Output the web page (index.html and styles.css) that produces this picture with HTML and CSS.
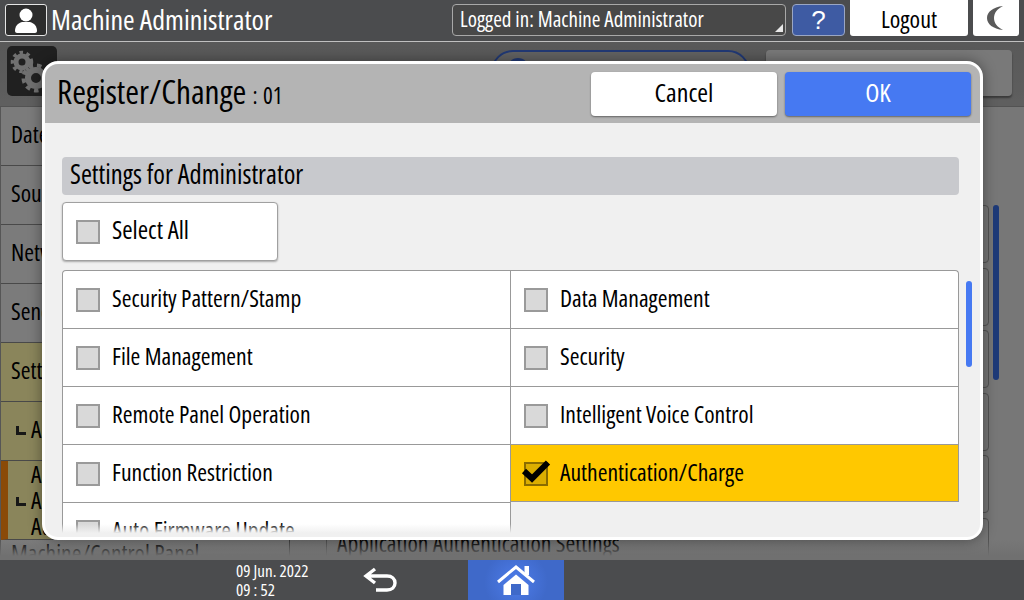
FILE: index.html
```html
<!DOCTYPE html>
<html lang="en">
<head>
<meta charset="utf-8">
<title>System Settings</title>
<link rel="stylesheet" href="styles.css">
</head>
<body>
<div class="screen">
  <header class="topbar">
    <div class="user-icon">
      <svg viewBox="0 0 40 30" width="40" height="30"><circle cx="20" cy="10" r="6.500" fill="#fff"/><path d="M9 26c0-5 3-8 7-9h8c4 1 7 4 7 9 0 1-1 2-2 2H11c-1 0-2-1-2-2z" fill="#fff"/></svg>
    </div>
    <div class="machine-title">Machine Administrator</div>
    <div class="login-box">Logged in: Machine Administrator<span class="corner"></span></div>
    <div class="help-btn">?</div>
    <div class="logout-btn">Logout</div>
    <div class="moon-btn">
      <svg viewBox="0 0 24 30" width="24" height="30"><path d="M19 3C9 4 3 9 3 15s6 11 16 12c-6-3-9-7-9-12s3-9 9-12z" fill="#5a5a5a"/></svg>
    </div>
  </header>

  <main class="main">
    <div class="subhead">
      <div class="gear-tile">
        <svg viewBox="0 0 50 50" width="50" height="50">
          <g fill="none" stroke="#cfcfcf"><circle cx="15" cy="16" r="6" stroke-width="5"/><circle cx="15" cy="16" r="9.500" stroke-width="3.500" stroke-dasharray="3.500 3.500"/><circle cx="29" cy="32" r="8" stroke-width="6"/><circle cx="29" cy="32" r="12.500" stroke-width="4" stroke-dasharray="4.500 4"/></g>
        </svg>
      </div>
      <div class="subhead-title">System Settings</div>
      <div class="search-pill"><span class="pill-dot"></span></div>
      <div class="sub-btn">Machine Settings</div>
    </div>
    <div class="content">
      <nav class="side">
        <div class="side-row">Date/Time/Timer</div>
        <div class="side-row">Sound</div>
        <div class="side-row">Network/Interface</div>
        <div class="side-row">Send (Email/Folder)</div>
        <div class="side-row side-olive">Settings for Administrator</div>
        <div class="side-row side-olive"><span class="elbow"></span>Administrator</div>
        <div class="side-row side-current">
          <div>Authentication</div>
          <div><span class="elbow"></span>Authentication</div>
          <div>Authentication</div>
        </div>
        <div class="side-row side-last">Machine/Control Panel</div>
      </nav>
      <section class="panel">
        <div class="panel-list">
          <div class="panel-btn"></div>
          <div class="panel-btn"></div>
          <div class="panel-btn"></div>
          <div class="panel-btn"></div>
          <div class="panel-btn"></div>
          <div class="panel-btn panel-text">Application Authentication Settings</div>
        </div>
        <div class="panel-scroll"></div>
      </section>
    </div>
    <div class="dim"></div>
    <div class="strip-fade"></div>
  </main>

  <footer class="footer">
    <div class="clock"><div>09 Jun. 2022</div><div>09 : 52</div></div>
    <div class="back">
      <svg viewBox="0 0 36 28" width="36" height="28"><path d="M12 3 3 10l9 7M4 10h20c5 0 8 3 8 7s-3 7-8 7H13" fill="none" stroke="#fff" stroke-width="3.400"/></svg>
    </div>
    <div class="home">
      <svg viewBox="0 0 40 32" width="40" height="32"><path d="M2 18 20 3l18 15" fill="none" stroke="#fff" stroke-width="3"/><path d="M28.500 2h4.500v9h-4.500z" fill="#fff"/><path d="M7.500 21 20 10.500 32.500 21v10h-25z" fill="#fff"/><path d="M15 20h10v11H15z" fill="#3f69c9"/></svg>
    </div>
  </footer>

  <div class="modal">
    <div class="modal-head">
      <div class="modal-title">Register/Change<span class="modal-num"> : 01</span></div>
      <div class="btn btn-cancel">Cancel</div>
      <div class="btn btn-ok">OK</div>
    </div>
    <div class="modal-body">
      <div class="section-title">Settings for Administrator</div>
      <div class="select-all"><span class="box"></span><span class="select-label">Select All</span></div>
      <div class="list-wrap">
        <div class="list">
          <div class="cell"><span class="box"></span>Security Pattern/Stamp</div>
          <div class="cell"><span class="box"></span>Data Management</div>
          <div class="cell"><span class="box"></span>File Management</div>
          <div class="cell"><span class="box"></span>Security</div>
          <div class="cell"><span class="box"></span>Remote Panel Operation</div>
          <div class="cell"><span class="box"></span>Intelligent Voice Control</div>
          <div class="cell"><span class="box"></span>Function Restriction</div>
          <div class="cell cell-on">
            <span class="box box-on">
              <svg class="tick" viewBox="0 0 30 24" width="30" height="24"><path d="M3 12l8 7.500L27 3.500" fill="none" stroke="#000" stroke-width="6"/></svg>
            </span>Authentication/Charge
          </div>
          <div class="cell"><span class="box"></span>Auto Firmware Update</div>
          <div class="cell-empty"></div>
        </div>
        <div class="fade"></div>
      </div>
      <div class="modal-scroll"></div>
    </div>
  </div>
</div>
</body>
</html>
```
FILE: styles.css
```css
* { box-sizing: border-box; }
html, body { margin: 0; padding: 0; }
body {
  width: 1024px;
  height: 600px;
  overflow: hidden;
  font-family: "Open Sans", "Liberation Sans", sans-serif;
  font-stretch: 75%;
  color: #000;
}
.screen {
  position: relative;
  width: 1024px;
  height: 600px;
  display: flex;
  flex-direction: column;
  overflow: hidden;
}

/* top bar */
.topbar {
  height: 41px;
  flex: none;
  background: #4b4c4e;
  display: flex;
  align-items: flex-start;
  color: #fff;
}
.user-icon {
  width: 42px;
  height: 32px;
  margin: 4px 0 0 5px;
  background: #2c2c2c;
  border: 1px solid #e4e4e4;
  border-radius: 3px;
  display: flex;
  align-items: center;
  justify-content: center;
}
.machine-title {
  width: 401px;
  margin-left: 4px;
  font-size: 28px;
  line-height: 39px;
}
.login-box {
  position: relative;
  width: 334px;
  height: 32px;
  margin: 4px 0 0 0;
  padding-left: 7px;
  border: 1px solid #a8a8a8;
  border-radius: 4px;
  background: #484848;
  font-size: 21px;
  line-height: 28px;
}
.corner {
  position: absolute;
  right: 2px;
  bottom: 3px;
  width: 0;
  height: 0;
  border-style: solid;
  border-width: 0 0 8px 8px;
  border-color: transparent transparent #e8e8e8 transparent;
}
.help-btn {
  width: 53px;
  height: 32px;
  margin: 4px 0 0 6px;
  background: #3e5ba3;
  border: 1px solid #9aa6c4;
  border-radius: 4px;
  font-family: "Liberation Sans", sans-serif;
  font-size: 26px;
  line-height: 30px;
  text-align: center;
}
.logout-btn {
  width: 118px;
  height: 36px;
  margin-left: 5px;
  background: #fff;
  border-radius: 0 0 3px 3px;
  color: #000;
  font-size: 24px;
  line-height: 37px;
  text-align: center;
}
.moon-btn {
  width: 46px;
  height: 36px;
  margin-left: 5px;
  background: #fff;
  border-radius: 0 0 3px 3px;
  display: flex;
  align-items: center;
  justify-content: center;
}

/* dimmed application behind the dialog */
.main {
  position: relative;
  flex: 1;
  min-height: 0;
  display: flex;
  flex-direction: column;
  background: #dcdcdc;
  overflow: hidden;
  border-top: 1px solid #c0c0c0;
}
.dim {
  position: absolute;
  inset: 0;
  background: rgba(0, 0, 0, 0.46);
}
.strip-fade {
  position: absolute;
  left: 0;
  right: 0;
  bottom: 0;
  height: 20px;
  background: linear-gradient(rgba(112, 112, 112, 0), #707070 80%);
}
.subhead {
  height: 65px;
  flex: none;
  display: flex;
  align-items: flex-start;
  background: linear-gradient(#a4a4a4, #b0b0b0);
  border-bottom: 1px solid #999;
}
.gear-tile {
  width: 50px;
  height: 50px;
  margin: 4px 0 0 7px;
  background: #3c3c3c;
  border-radius: 5px;
  overflow: hidden;
}
.subhead-title {
  width: 428px;
  margin-left: 6px;
  margin-top: 11px;
  font-size: 25px;
}
.search-pill {
  position: relative;
  width: 259px;
  height: 46px;
  margin-top: 8px;
  border: 2px solid #3d6ad8;
  border-radius: 22px;
  background: #b8b8b8;
}
.pill-dot {
  position: absolute;
  left: 14px;
  top: 6px;
  width: 22px;
  height: 22px;
  border-radius: 50%;
  background: #3d6ad8;
}
.sub-btn {
  width: 246px;
  height: 46px;
  margin: 8px 0 0 16px;
  background: #e0e0e0;
  border-radius: 4px;
  box-shadow: 0 2px 2px rgba(0, 0, 0, 0.4);
  font-size: 22px;
  line-height: 42px;
  padding-top: 2px;
  text-align: center;
}
.content {
  flex: 1;
  min-height: 0;
  display: flex;
}
.side {
  width: 290px;
  flex: none;
  display: flex;
  flex-direction: column;
  border-left: 1px solid #a0a0a0;
  border-right: 1px solid #777;
}
.side-row {
  height: 59px;
  flex: none;
  padding-left: 10px;
  background: #e4e4e4;
  border-bottom: 1px solid #888;
  font-size: 23.600px;
  line-height: 54px;
}
.side-olive { background: #fff6a8; }
.side-current {
  height: 79px;
  line-height: 26px;
  background: #fff6a8;
  border-left: 7px solid #ff8a10;
  padding-left: 23px;
}
.side-olive .elbow { margin-left: 5px; }
.side-current .elbow { margin-left: -15px; }
.elbow {
  display: inline-block;
  width: 10px;
  height: 9px;
  margin-right: 5px;
  vertical-align: 3px;
  border-left: 3px solid #2c2c2c;
  border-bottom: 3px solid #2c2c2c;
}
.side-last { line-height: 26px; }
.panel {
  flex: 1;
  display: flex;
  padding: 0 0 0 36px;
  position: relative;
}
.panel-list {
  width: 663px;
  margin-top: 98px;
  display: flex;
  flex-direction: column;
  gap: 4.500px;
}
.panel-btn {
  height: 58px;
  flex: none;
  background: #dcdcdc;
  border: 1px solid #999;
  border-radius: 4px;
  font-size: 23.600px;
  padding-left: 10px;
  line-height: 52px;
}
.panel-text { line-height: 44px; padding-top: 2px; }
.panel-scroll {
  width: 6px;
  height: 175px;
  margin: 98px 0 0 4px;
  border-radius: 3px;
  background: #386bde;
}

/* footer */
.footer {
  height: 40px;
  flex: none;
  background: #4b4c4e;
  color: #fff;
  display: flex;
  align-items: center;
}
.clock {
  width: 127px;
  margin-left: 236px;
  font-size: 17px;
  line-height: 19px;
}
.back {
  width: 105px;
  display: flex;
  justify-content: flex-start;
}
.home {
  width: 96px;
  height: 40px;
  background: radial-gradient(circle at 50% 55%, #4d7cea 0, #3f69c9 60%);
  display: flex;
  align-items: center;
  justify-content: center;
}

/* dialog */
.modal {
  position: absolute;
  left: 42px;
  top: 61px;
  width: 941px;
  height: 479px;
  background: #f0f0f0;
  border: 3px solid #fff;
  border-radius: 16px;
  box-shadow: 0 0 14px rgba(0, 0, 0, 0.4);
  overflow: hidden;
  display: flex;
  flex-direction: column;
}
.modal-head {
  height: 59px;
  flex: none;
  background: #b4b4b4;
  display: flex;
  align-items: flex-start;
  padding-left: 12px;
}
.modal-title {
  width: 534px;
  font-size: 33.300px;
  line-height: 54px;
}
.modal-num {
  margin-left: 1px;
  font-size: 23px;
  word-spacing: 1px;
}
.btn {
  width: 186px;
  height: 44px;
  margin-top: 8px;
  border-radius: 4px;
  box-shadow: 0 1px 2px rgba(0, 0, 0, 0.45);
  font-size: 26px;
  line-height: 40px;
  text-align: center;
}
.btn-cancel { background: #fff; margin-right: 8px; }
.btn-ok { background: #4679f2; color: #fff; }
.modal-body {
  position: relative;
  flex: 1;
  min-height: 0;
  padding: 34px 0 0 17px;
}
.section-title {
  width: 897px;
  height: 38px;
  padding-left: 8px;
  background: #c8c9cd;
  border-radius: 4px;
  font-size: 26.500px;
  line-height: 34px;
}
.select-all {
  width: 216px;
  height: 59px;
  margin-top: 7px;
  display: flex;
  align-items: center;
  padding-left: 13px;
  background: #fff;
  border: 1px solid #a0a0a0;
  border-radius: 4px;
  box-shadow: 0 1px 2px rgba(0, 0, 0, 0.3);
  font-size: 25px;
}
.select-label { margin-bottom: 6px; }
.box {
  position: relative;
  width: 24px;
  height: 24px;
  flex: none;
  margin-right: 12px;
  background: #d9d9d9;
  border: 2px solid #9a9a9a;
}
.box-on {
  background: #dcae00;
  border-color: #8a6c00;
}
.tick {
  position: absolute;
  left: -5px;
  top: -5px;
}
.list-wrap {
  position: relative;
  width: 897px;
  height: 263px;
  margin-top: 9px;
  overflow: hidden;
}
.list {
  display: grid;
  grid-template-columns: 449px 448px;
  grid-auto-rows: 58px;
}
.cell {
  display: flex;
  align-items: center;
  padding-left: 13px;
  padding-bottom: 3px;
  background: #fff;
  border-left: 1px solid #999;
  border-right: 1px solid #999;
  border-top: 1px solid #999;
  font-size: 23.600px;
  line-height: 28px;
}
.cell .box { top: 1.500px; margin-top: 1px; }
.cell:nth-child(even) { border-left: 0; }
.cell:first-child { border-top-left-radius: 4px; }
.cell:nth-child(2) { border-top-right-radius: 4px; }
.cell:nth-child(8) { border-bottom: 1px solid #999; }
.cell-on { background: #ffc800; }
.fade {
  position: absolute;
  left: -2px;
  right: -2px;
  bottom: 0;
  height: 12px;
  background: linear-gradient(rgba(240, 240, 240, 0) 25%, #f0f0f0 100%);
}
.modal-scroll {
  position: absolute;
  left: 921px;
  top: 158px;
  width: 6px;
  height: 86px;
  border-radius: 3px;
  background: #4679f2;
}
```
